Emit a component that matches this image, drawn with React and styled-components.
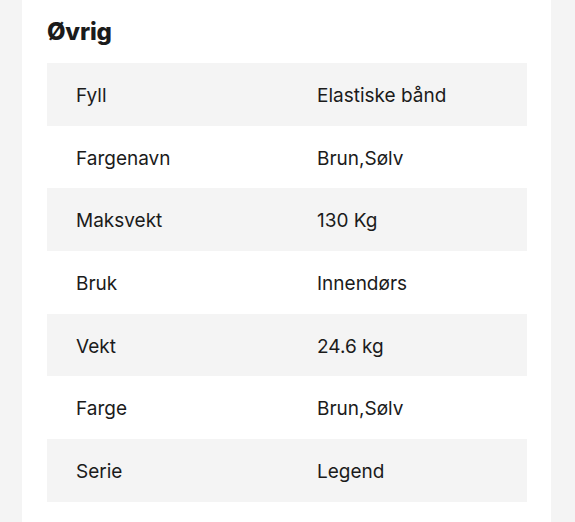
import React from "react";
import styled, { createGlobalStyle } from "styled-components";

const GlobalStyle = createGlobalStyle`
   html, body {
      margin: 0;
      padding: 0;
      background: #f4f4f4;
   }
   body {
      font-family: Inter, "Noto Sans", "Liberation Sans", sans-serif;
      color: #1b1b1b;
   }
`;

const Page = styled.div`
   display: flex;
   padding: 0 24px 0 22px;
   min-height: 522px;
`;

const Card = styled.section`
   flex: 1;
   background: #ffffff;
   padding: 17px 24px 20px 25px;
`;

const Heading = styled.h2`
   margin: 0 0 16px;
   font-size: 24px;
   line-height: 30px;
   font-weight: 800;
   letter-spacing: -0.2px;
`;

const Table = styled.table`
   width: 100%;
   border-collapse: collapse;
   font-size: 19px;
`;

const Row = styled.tr`
   background: ${(props) => (props.$shaded ? "#f4f4f4" : "#ffffff")};
   height: 62.7px;
`;

const Cell = styled.td`
   padding: 3px 0 0 ${(props) => (props.$label ? "29px" : "0")};
   vertical-align: middle;
   width: ${(props) => (props.$label ? "270px" : "auto")};
   box-sizing: border-box;
   line-height: 26px;
`;

const specs = [
   ["Fyll", "Elastiske bånd"],
   ["Fargenavn", "Brun,Sølv"],
   ["Maksvekt", "130 Kg"],
   ["Bruk", "Innendørs"],
   ["Vekt", "24.6 kg"],
   ["Farge", "Brun,Sølv"],
   ["Serie", "Legend"],
];

const App = () => {
   return (
      <>
         <GlobalStyle />
         <Page>
            <Card>
               <Heading>Øvrig</Heading>
               <Table>
                  <tbody>
                     {specs.map(([key, value], i) => (
                        <Row key={key} $shaded={i % 2 === 0}>
                           <Cell $label>{key}</Cell>
                           <Cell>{value}</Cell>
                        </Row>
                     ))}
                  </tbody>
               </Table>
            </Card>
         </Page>
      </>
   );
};

export default App;
